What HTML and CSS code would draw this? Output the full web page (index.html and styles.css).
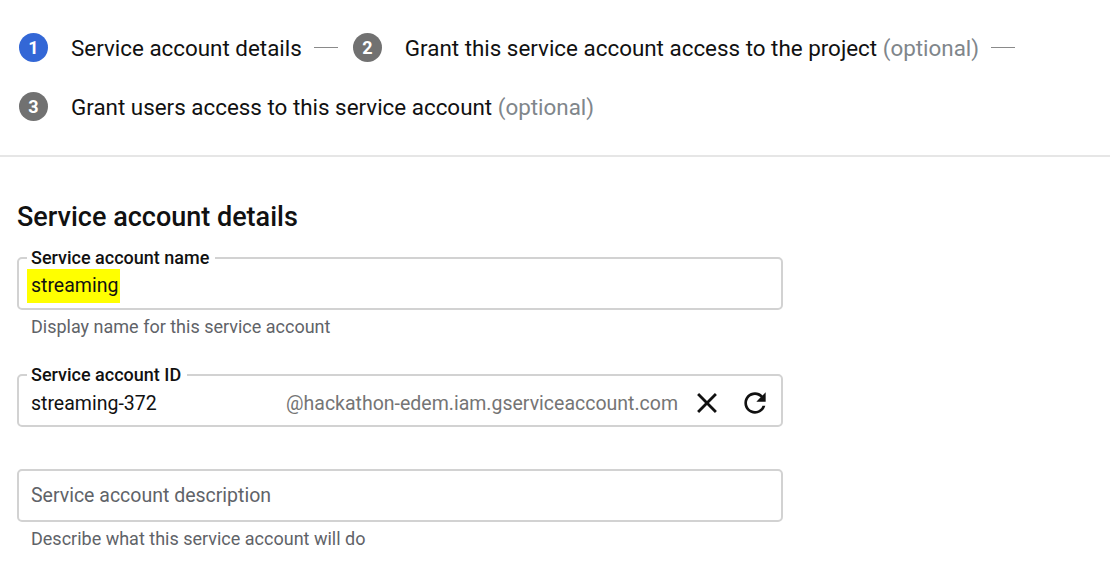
FILE: index.html
```html
<!DOCTYPE html>
<html>
<head>
<meta charset="utf-8">
<link rel="stylesheet" href="styles.css">
</head>
<body>
<div class="stepper">
  <div class="step">
    <span class="num active">1</span>
    <span class="step-title">Service account details</span>
    <span class="dash"></span>
  </div>
  <div class="step">
    <span class="num">2</span>
    <span class="step-title">Grant this service account access to the project <span class="opt">(optional)</span></span>
    <span class="dash"></span>
  </div>
  <div class="step">
    <span class="num">3</span>
    <span class="step-title">Grant users access to this service account <span class="opt">(optional)</span></span>
  </div>
</div>

<div class="content">
  <h2 class="heading">Service account details</h2>

  <fieldset class="field">
    <legend class="label">Service account name</legend>
    <div class="row"><span class="value hl">streaming</span></div>
  </fieldset>
  <div class="helper">Display name for this service account</div>

  <fieldset class="field field-id">
    <legend class="label">Service account ID</legend>
    <div class="row">
      <span class="value">streaming-372</span>
      <span class="suffix">@hackathon-edem.iam.gserviceaccount.com</span>
      <svg class="icon icon-x" viewBox="0 0 24 24"><path d="M19 6.41L17.59 5 12 10.59 6.41 5 5 6.41 10.59 12 5 17.59 6.41 19 12 13.41 17.59 19 19 17.59 13.41 12z"/></svg>
      <svg class="icon icon-r" viewBox="0 0 24 24"><path d="M17.65 6.35C16.2 4.9 14.21 4 12 4c-4.42 0-7.99 3.58-7.99 8s3.57 8 7.99 8c3.73 0 6.84-2.55 7.73-6h-2.08c-.82 2.33-3.04 4-5.65 4-3.31 0-6-2.69-6-6s2.69-6 6-6c1.66 0 3.14.69 4.22 1.78L13 11h7V4l-2.35 2.35z"/></svg>
    </div>
  </fieldset>

  <div class="box">
    <span class="placeholder">Service account description</span>
  </div>
  <div class="helper helper-last">Describe what this service account will do</div>
</div>
</body>
</html>
```

FILE: styles.css
```css
html, body {
  margin: 0;
  background: #fff;
}
body {
  font-family: Roboto, "Liberation Sans", sans-serif;
  color: #202124;
}
.stepper {
  display: flex;
  flex-wrap: wrap;
  padding: 18px 0 19px 19px;
  border-bottom: 2px solid #e6e6e6;
}
.step {
  display: flex;
  align-items: center;
  height: 59px;
}
.num {
  width: 29px;
  height: 29px;
  border-radius: 50%;
  background: #717171;
  color: #fff;
  font-size: 18px;
  font-weight: 700;
  display: flex;
  align-items: center;
  justify-content: center;
  margin-right: 23px;
}
.num.active {
  background: #3367d6;
}
.step-title {
  font-size: 22.4px;
  color: #111;
  white-space: nowrap;
}
.opt {
  color: #80868b;
}
.dash {
  width: 24px;
  height: 1px;
  background: #8a8a8a;
  margin: 0 15px 0 12px;
}
.content {
  padding-left: 17px;
}
.heading {
  margin: 44px 0 15px;
  font-size: 27px;
  line-height: 32px;
  font-weight: 500;
  color: #111;
}
.field {
  width: 766px;
  box-sizing: border-box;
  margin: 0;
  border: 2px solid #d2d2d2;
  border-radius: 5px;
  padding: 0 10px 4px 8px;
}
.label {
  padding: 0 6px 0 4px;
  font-size: 18px;
  line-height: 20px;
  font-weight: 500;
  color: #111;
}
.row {
  display: flex;
  align-items: center;
  height: 36px;
  padding-left: 4px;
}
.value {
  font-size: 19.5px;
  color: #111;
}
.hl {
  background: #ffff00;
  padding: 1px 2px 1px 4px;
  margin-left: -4px;
  line-height: 32px;
}
.suffix {
  margin-left: auto;
  font-size: 19.5px;
  color: #757575;
  margin-right: 12px;
}
.icon {
  width: 32px;
  height: 32px;
  fill: #111;
}
.icon-x {
  width: 34px;
  height: 34px;
  margin-right: 15px;
}
.helper {
  margin-top: 7px;
  padding-left: 14px;
  font-size: 18px;
  line-height: 20px;
  color: #5f6368;
}
.field-id {
  margin-top: 28px;
}
.box {
  margin-top: 42px;
  width: 766px;
  height: 53px;
  box-sizing: border-box;
  border: 2px solid #d2d2d2;
  border-radius: 5px;
  display: flex;
  align-items: center;
  padding-left: 12px;
}
.placeholder {
  font-size: 19.5px;
  color: #5f6368;
}
.helper-last {
  margin-top: 7px;
}
```
